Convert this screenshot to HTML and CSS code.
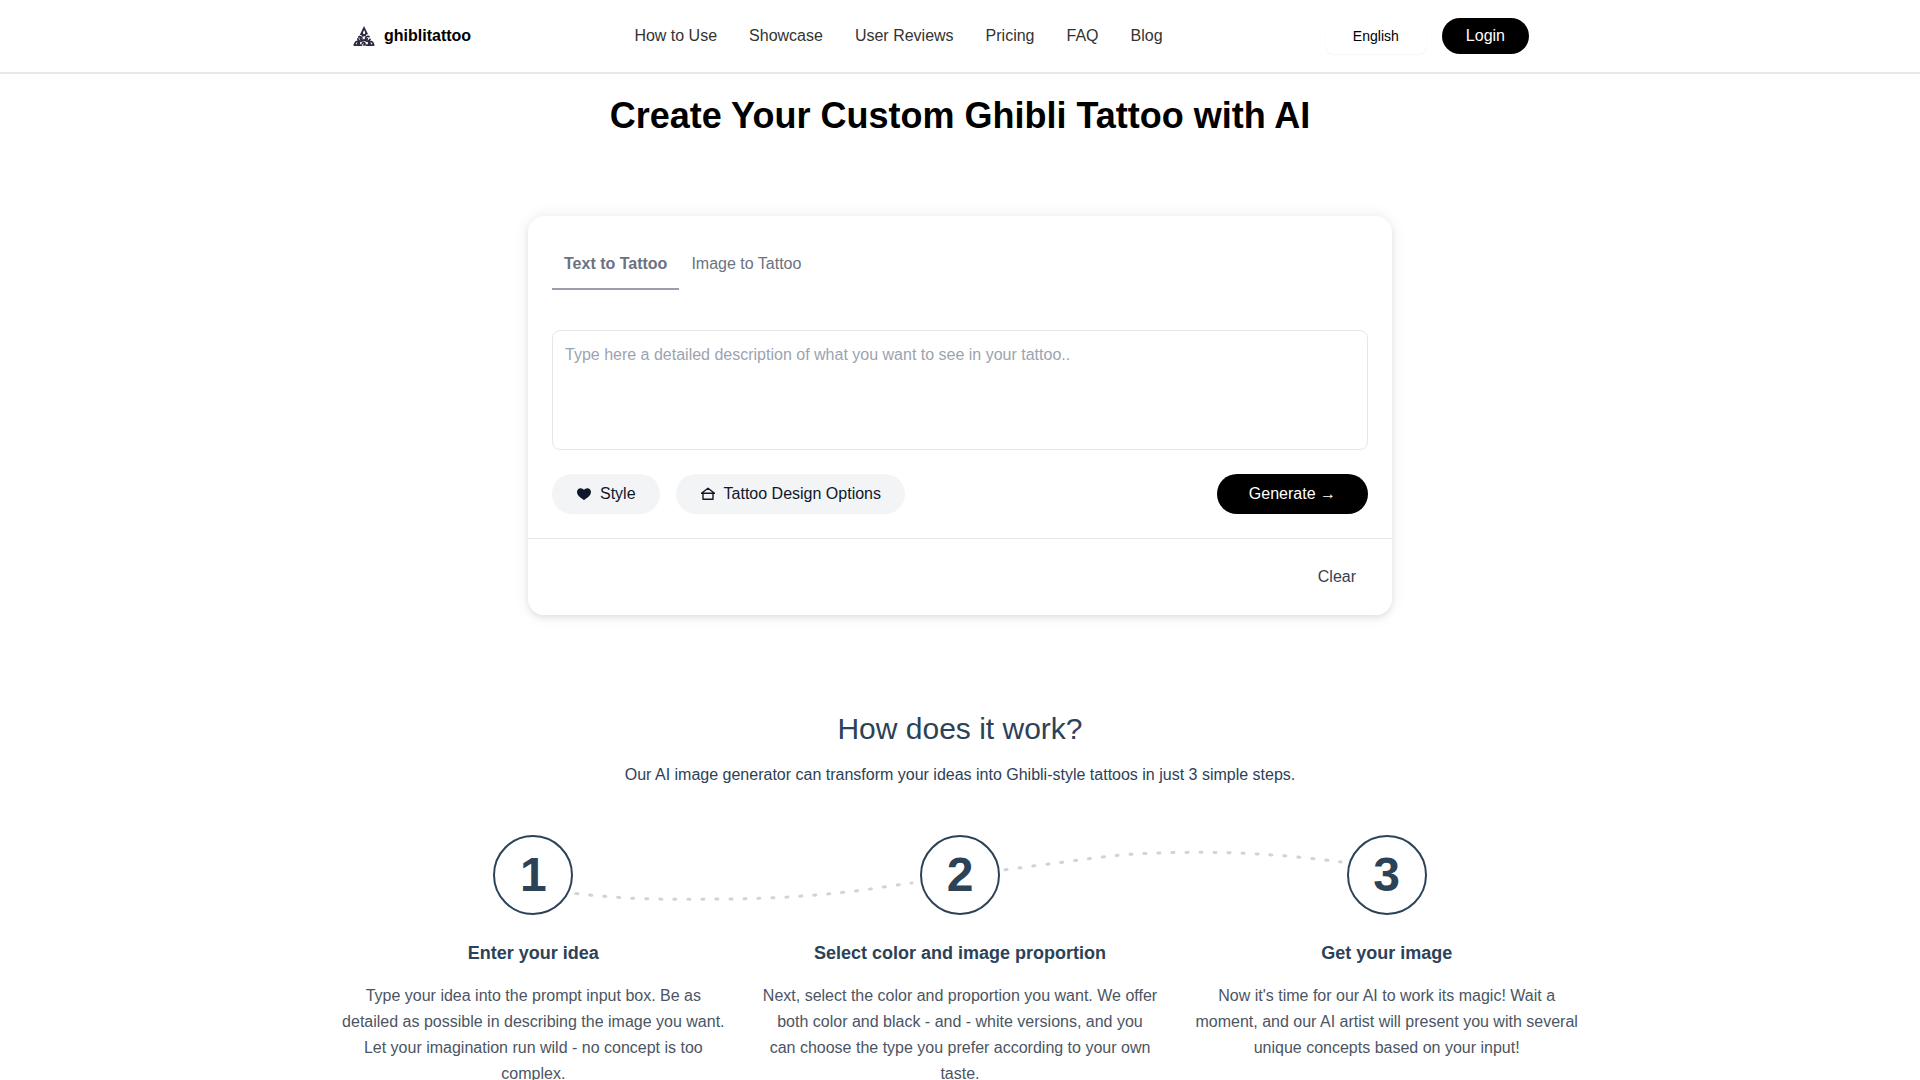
FILE: index.html
```html
<!DOCTYPE html>
<html lang="en">
<head>
<meta charset="utf-8">
<meta name="viewport" content="width=device-width, initial-scale=1">
<title>Create Your Custom Ghibli Tattoo with AI</title>
<link rel="stylesheet" href="styles.css">
</head>
<body>
<header class="site-header">
  <div class="header-inner">
    <a class="brand" href="#">
      <svg class="brand-mark" viewBox="0 0 24 24" aria-hidden="true">
        <path fill="#2b2940" fill-rule="evenodd" d="M12 2 16.200 10.400C14.600 10 13.700 10.800 13.900 12.200 12.400 12 11 12.300 10.200 12.800 10 11.300 9 10.800 7.600 11.200zM12.100 6.200C11.200 7.600 10.800 8.600 11.100 9.500c.4.900 1.700.9 2 0 .3-.9-.1-1.900-1-3.300z"/>
        <path fill="none" stroke="#2b2940" stroke-width="1.800" stroke-linecap="round" d="M6.800 12.900c1.800-.5 3.200.2 3.100 1.500-.1 1-1.400 1.100-1.700.3M17 12.600c-1.900-.5-3.500.5-3.400 1.900.1 1.100 1.500 1.200 1.800.3M5.900 14.900c.2 1.700 1.600 2.500 3.100 2.200 1.300-.2 2-1.100 3-1.100 1.100 0 1.700 1.100 3.100 1.200 1.400.1 2.500-.6 2.900-1.900M4.600 17.600c1.700-.2 2.900.4 2.700 1.600-.2.800-1.200.8-1.500.2M19.400 17.600c-1.800-.2-3 .5-2.800 1.700.2.800 1.300.8 1.500.1M10.300 19.400c.2-.9 1.300-1.200 2.100-.6.900.7.500 2-.4 2.200M2.300 21.100h7.200M14.300 21.100h7.400M3.600 18.300 2.300 21M20.500 18.300 21.700 21"/>
      </svg>
      <span>ghiblitattoo</span>
    </a>
    <nav class="main-nav" aria-label="Main">
      <a href="#how">How to Use</a>
      <a href="#showcase">Showcase</a>
      <a href="#reviews">User Reviews</a>
      <a href="#pricing">Pricing</a>
      <a href="#faq">FAQ</a>
      <a href="#blog">Blog</a>
    </nav>
    <div class="header-actions">
      <button class="language" type="button">English</button>
      <button class="login" type="button">Login</button>
    </div>
  </div>
</header>
<main>
  <h1 class="page-title">Create Your Custom Ghibli Tattoo with AI</h1>
  <form class="generator">
    <div class="generator-body">
      <div class="tabs" role="tablist">
        <button class="tab tab-active" type="button" role="tab" aria-selected="true">Text to Tattoo</button>
        <button class="tab" type="button" role="tab" aria-selected="false">Image to Tattoo</button>
      </div>
      <textarea class="prompt" aria-label="Tattoo description" placeholder="Type here a detailed description of what you want to see in your tattoo.."></textarea>
      <div class="toolbar">
        <button class="pill" type="button">
          <svg class="pill-icon" viewBox="0 0 16 16" aria-hidden="true"><path fill="#0f172a" d="M8 14.200C6.300 12.900 1 10.200 1 6.100 1 3.700 2.700 2.200 4.600 2.200c1.400 0 2.700.7 3.400 1.800.7-1.100 2-1.800 3.400-1.800C13.300 2.200 15 3.700 15 6.100c0 4.100-5.300 6.800-7 8.100z"/></svg>
          Style
        </button>
        <button class="pill" type="button">
          <svg class="pill-icon" viewBox="0 0 16 16" fill="none" stroke="#0f172a" stroke-width="1.400" stroke-linejoin="round" aria-hidden="true"><path d="M1 7.200h14M1.800 7 8 2.300 14.200 7M3 7.200v6.100h10V7.200"/></svg>
          Tattoo Design Options
        </button>
        <button class="generate" type="submit">Generate →</button>
      </div>
    </div>
    <div class="generator-footer">
      <button class="clear" type="reset">Clear</button>
    </div>
  </form>
  <section class="how" id="how">
    <h2 class="how-title">How does it work?</h2>
    <p class="how-lead">Our AI image generator can transform your ideas into Ghibli-style tattoos in just 3 simple steps.</p>
    <div class="steps">
      <svg class="trail" viewBox="0 0 1280 80" preserveAspectRatio="none" fill="none" stroke="#d1d3d8" stroke-width="3" stroke-linecap="round" stroke-dasharray="2 12" aria-hidden="true">
        <path d="M256 58.500C300 64 350 65 396 64 C460 64 500 60 535 56 C560 53 575 50 592 48"/>
        <path d="M685 34.700C730 29 765 24 796 20.500 C830 17 900 16 945 19.500 C970 21 1000 24 1021 27"/>
      </svg>
      <article class="step">
        <div class="step-number">1</div>
        <h3 class="step-title">Enter your idea</h3>
        <p class="step-text">Type your idea into the prompt input box. Be as detailed as possible in describing the image you want. Let your imagination run wild - no concept is too complex.</p>
      </article>
      <article class="step">
        <div class="step-number">2</div>
        <h3 class="step-title">Select color and image proportion</h3>
        <p class="step-text">Next, select the color and proportion you want. We offer both color and black - and - white versions, and you can choose the type you prefer according to your own taste.</p>
      </article>
      <article class="step">
        <div class="step-number">3</div>
        <h3 class="step-title">Get your image</h3>
        <p class="step-text">Now it's time for our AI to work its magic! Wait a moment, and our AI artist will present you with several unique concepts based on your input!</p>
      </article>
    </div>
  </section>
</main>
</body>
</html>
```
FILE: styles.css
```css
* {
  box-sizing: border-box;
}

body,
h1,
h2,
h3,
p {
  margin: 0;
}

body {
  background: #fff;
  color: #000;
  font-family: "Liberation Sans", Arial, sans-serif;
  font-size: 16px;
  line-height: 24px;
}

a {
  color: inherit;
  text-decoration: none;
}

button,
textarea {
  border: 0;
  background: none;
  color: inherit;
  font: inherit;
}

button {
  padding: 0;
  cursor: pointer;
}

.site-header {
  border-bottom: 2px solid #e5e7eb;
}

.header-inner {
  display: flex;
  align-items: center;
  justify-content: space-between;
  max-width: 1280px;
  margin: 0 auto;
  padding: 18px 71px 18px 32px;
}

.brand {
  display: flex;
  align-items: center;
  gap: 8px;
  font-weight: 700;
}

.brand-mark {
  width: 24px;
  height: 24px;
}

.main-nav {
  display: flex;
  gap: 32px;
  color: #333;
}

.header-actions {
  display: flex;
  gap: 16px;
}

.language {
  width: 100px;
  height: 36px;
  border-radius: 8px;
  box-shadow: 0 1px 2px rgba(0, 0, 0, 0.05);
  font-size: 14px;
}

.login {
  height: 36px;
  padding: 0 24px;
  border-radius: 18px;
  background: #000;
  color: #fff;
}

.page-title {
  padding: 22px 16px 0;
  font-size: 36px;
  line-height: 40px;
  text-align: center;
}

.generator {
  max-width: 864px;
  margin: 80px auto 0;
  border-radius: 16px;
  background: #fff;
  box-shadow: 0 0 16px rgba(0, 0, 0, 0.08), 0 3px 6px rgba(0, 0, 0, 0.08);
}

.generator-body {
  padding: 24px;
}

.tabs {
  display: flex;
}

.tab {
  padding: 12px;
  border-bottom: 2px solid transparent;
  color: #6b7280;
}

.tab-active {
  border-bottom-color: #9c9cae;
  font-weight: 700;
}

.prompt {
  display: block;
  width: 100%;
  height: 120px;
  margin-top: 40px;
  padding: 12px;
  border: 1px solid #e5e7eb;
  border-radius: 8px;
  resize: none;
}

.prompt::placeholder {
  color: #9ca3af;
}

.toolbar {
  display: flex;
  gap: 16px;
  margin-top: 24px;
}

.pill {
  display: flex;
  align-items: center;
  gap: 8px;
  height: 40px;
  padding: 0 24px;
  border-radius: 20px;
  background: #f3f4f6;
  color: #0f172a;
}

.pill-icon {
  width: 16px;
  height: 16px;
}

.generate {
  height: 40px;
  margin-left: auto;
  padding: 0 32px;
  border-radius: 20px;
  background: #000;
  color: #fff;
}

.generator-footer {
  display: flex;
  justify-content: flex-end;
  padding: 18px 24px;
  border-top: 1px solid #e5e7eb;
}

.clear {
  height: 40px;
  padding: 0 12px;
  color: #374151;
}

.how {
  max-width: 1280px;
  margin: 0 auto;
  padding: 96px 0 32px;
  color: #2c4257;
  text-align: center;
}

.how-title {
  font-size: 30px;
  font-weight: 400;
  line-height: 36px;
}

.how-lead {
  margin-top: 16px;
}

.steps {
  position: relative;
  display: grid;
  grid-template-columns: repeat(3, 1fr);
  margin-top: 48px;
}

.trail {
  position: absolute;
  top: 0;
  left: 0;
  width: 100%;
  height: 80px;
}

.step {
  display: flex;
  flex-direction: column;
  align-items: center;
  padding: 0 16px;
}

.step-number {
  width: 80px;
  height: 80px;
  border: 2px solid #2c4257;
  border-radius: 50%;
  font-size: 48px;
  font-weight: 700;
  line-height: 76px;
}

.step-title {
  margin-top: 24px;
  font-size: 18px;
  line-height: 28px;
}

.step-text {
  margin-top: 16px;
  color: #4b5563;
  line-height: 26px;
}
```
